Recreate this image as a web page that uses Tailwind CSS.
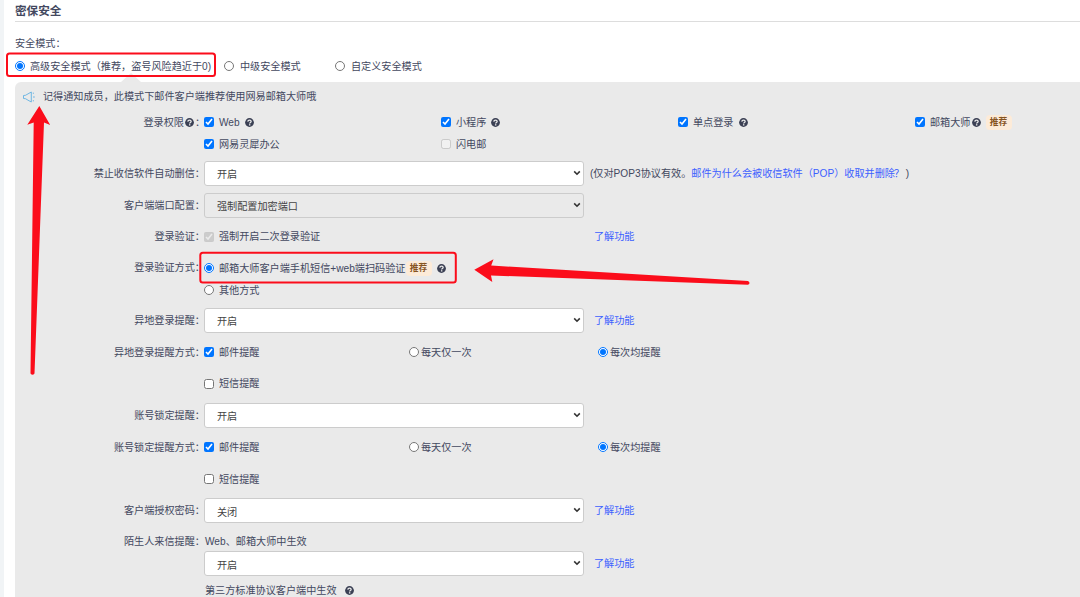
<!DOCTYPE html>
<html lang="zh-CN">
<head>
    <meta charset="UTF-8">
    <meta name="viewport" content="width=device-width, initial-scale=1.0">
    <title>密保安全</title>
    <script src="https://cdn.jsdelivr.net/npm/@tailwindcss/browser@4"></script>
</head>
<body class="relative w-[1080px] h-[597px] overflow-hidden bg-white border-l-4 border-[#f1f4f6] font-['Liberation_Sans','Noto_Sans_CJK_SC',sans-serif] text-[10.15px] leading-[15px] text-[#434860] whitespace-nowrap">
    <!-- Icons -->
    <svg class="hidden">
        <symbol id="help" viewBox="0 0 18 18">
            <circle cx="9" cy="9" r="8.8" fill="#3b4054"/>
            <path d="M5.600 7.200C5.800 5 7.200 4.100 9.100 4.100s3.200 1 3.200 2.800c0 2.100-3 2-3 4.300" fill="none" stroke="#eaeaea" stroke-width="2.600"/>
            <rect x="7.900" y="12.400" width="2.800" height="2.600" fill="#eaeaea"/>
        </symbol>
        <symbol id="chevron" viewBox="0 0 8 6">
            <path d="M1.200 1.400L4 4.200L6.800 1.400" fill="none" stroke="#333" stroke-width="1.600"/>
        </symbol>
    </svg>

    <div class="pl-[11px]">
        <!-- Title -->
        <h2 class="h-[22px] pt-[3px] text-[11.6px] font-bold leading-[15px] text-[#434860] border-b border-[#dddddd]">密保安全</h2>

        <!-- Security mode -->
        <p class="pt-[14px] h-[36px]">安全模式：</p>
        <div class="flex h-[24px] pb-[8px] items-center">
            <label class="flex items-center w-[209px]"><input type="radio" name="mode" checked class="size-[10px] mr-[5px]">高级安全模式（推荐，盗号风险趋近于0)</label>
            <label class="flex items-center w-[111px]"><input type="radio" name="mode" class="size-[10px] mr-[6px]">中级安全模式</label>
            <label class="flex items-center"><input type="radio" name="mode" class="size-[10px] mr-[6px]">自定义安全模式</label>
        </div>

        <!-- Settings panel -->
        <div class="relative h-[530px] bg-[#eaeaea] rounded-tl-[6px]">
            <svg class="absolute left-[106px] -top-[9px] w-[20px] h-[9px]" viewBox="0 0 20 9"><path d="M0 9L10 0L20 9Z" fill="#eaeaea"/></svg>

            <div class="flex h-[29px] items-center pl-[8px]">
                <svg class="w-[12px] h-[12px] mr-[8px]" viewBox="0 0 12 12" fill="none" stroke="#62b1e2" stroke-width=".9"><path d="M.5 4.500L2.500 4.300L8.300 1V11L5 9.200L2.500 7.700L.5 7.500ZM9.800 2.200H11M10 6H11.800M9.800 9.800H11"/></svg>
                <span>记得通知成员，此模式下邮件客户端推荐使用网易邮箱大师哦</span>
            </div>

            <div class="flex h-[46px]">
                <div class="flex w-[190px] -mr-px h-[22px] items-center justify-end">登录权限<svg class="size-[9px] ml-px"><use href="#help"/></svg><span class="ml-[1px] w-[10px]">：</span></div>
                <div>
                    <div class="flex h-[22px] items-center">
                        <label class="flex items-center w-[237px]"><input type="checkbox" checked class="size-[10px] mr-[5px]">Web<svg class="size-[9px] ml-[5px]"><use href="#help"/></svg></label>
                        <label class="flex items-center w-[237px]"><input type="checkbox" checked class="size-[10px] mr-[5px]">小程序<svg class="size-[9px] ml-[5px]"><use href="#help"/></svg></label>
                        <label class="flex items-center w-[237px]"><input type="checkbox" checked class="size-[10px] mr-[5px]">单点登录<svg class="size-[9px] ml-[5px]"><use href="#help"/></svg></label>
                        <label class="flex items-center"><input type="checkbox" checked class="size-[10px] mr-[5px]">邮箱大师<svg class="size-[9px] ml-px"><use href="#help"/></svg><span class="ml-[5px] w-[26px] h-[15px] text-center text-[8.700px] leading-[15px] font-bold text-[#86541f] bg-[#fdebd8] rounded-[4px]">推荐</span></label>
                    </div>
                    <div class="flex h-[22px] items-center">
                        <label class="flex items-center w-[237px]"><input type="checkbox" checked class="size-[10px] mr-[5px]">网易灵犀办公</label>
                        <label class="flex items-center"><input type="checkbox" disabled class="size-[10px] mr-[5px]">闪电邮</label>
                    </div>
                </div>
            </div>

            <div class="flex h-[32px] items-center">
                <div class="w-[190px] -mr-px text-right">禁止收信软件自动删信：</div>
                <div class="relative">
                    <select class="block appearance-none w-[380px] h-[25px] pl-[12px] pt-[3px] bg-white border border-[#cccccc] rounded-[3px] text-[#444]"><option>开启</option></select>
                    <svg class="absolute right-[3px] top-[9px] w-[8px] h-[6px]"><use href="#chevron"/></svg>
                </div>
                <span class="ml-[6px]">(仅对POP3协议有效。<a class="text-[#3c60ff]">邮件为什么会被收信软件（POP）收取并删除<span class="inline-block w-[8px] indent-[-1px]">？</span></a> )</span>
            </div>

            <div class="flex h-[32px] items-center">
                <div class="w-[190px] -mr-px text-right">客户端端口配置：</div>
                <div class="relative">
                    <select class="block appearance-none w-[380px] h-[25px] pl-[12px] pt-[3px] bg-[#eaeaea] border border-[#cccccc] rounded-[3px] text-[#444]"><option>强制配置加密端口</option></select>
                    <svg class="absolute right-[3px] top-[9px] w-[8px] h-[6px]"><use href="#chevron"/></svg>
                </div>
            </div>

            <div class="flex h-[31px] items-center">
                <div class="w-[190px] -mr-px text-right">登录验证：</div>
                <label class="flex items-center w-[390px]"><input type="checkbox" checked disabled class="size-[10px] mr-[5px]">强制开启二次登录验证</label>
                <a class="text-[#3c60ff]">了解功能</a>
            </div>

            <div class="flex h-[52px] pt-[5px]">
                <div class="w-[190px] -mr-px h-[22px] leading-[22px] text-right">登录验证方式：</div>
                <div>
                    <label class="flex h-[22px] items-center"><input type="radio" name="verify" checked class="size-[10px] mr-[5px]">邮箱大师客户端手机短信+web端扫码验证<span class="w-[26px] h-[15px] text-center text-[8.700px] leading-[15px] font-bold text-[#86541f] bg-[#fdebd8] rounded-[4px]">推荐</span><svg class="size-[9px] ml-[5px]"><use href="#help"/></svg></label>
                    <label class="flex h-[22px] items-center"><input type="radio" name="verify" class="size-[10px] mr-[5px]">其他方式</label>
                </div>
            </div>

            <div class="flex h-[32px] items-center">
                <div class="w-[190px] -mr-px text-right">异地登录提醒：</div>
                <div class="relative">
                    <select class="block appearance-none w-[380px] h-[25px] pl-[12px] pt-[3px] bg-white border border-[#cccccc] rounded-[3px] text-[#444]"><option>开启</option></select>
                    <svg class="absolute right-[3px] top-[9px] w-[8px] h-[6px]"><use href="#chevron"/></svg>
                </div>
                <a class="ml-[10px] text-[#3c60ff]">了解功能</a>
            </div>

            <div class="flex h-[32px] items-center">
                <div class="w-[190px] -mr-px text-right">异地登录提醒方式：</div>
                <label class="flex items-center w-[205px]"><input type="checkbox" checked class="size-[10px] mr-[5px]">邮件提醒</label>
                <label class="flex items-center w-[189px]"><input type="radio" name="remote" class="size-[10px] mr-[2px]">每天仅一次</label>
                <label class="flex items-center"><input type="radio" name="remote" checked class="size-[10px] mr-[2px]">每次均提醒</label>
            </div>
            <div class="flex h-[31px] items-center pl-[189px]">
                <label class="flex items-center"><input type="checkbox" class="size-[10px] mr-[5px]">短信提醒</label>
            </div>

            <div class="flex h-[32px] items-center">
                <div class="w-[190px] -mr-px text-right">账号锁定提醒：</div>
                <div class="relative">
                    <select class="block appearance-none w-[380px] h-[25px] pl-[12px] pt-[3px] bg-white border border-[#cccccc] rounded-[3px] text-[#444]"><option>开启</option></select>
                    <svg class="absolute right-[3px] top-[9px] w-[8px] h-[6px]"><use href="#chevron"/></svg>
                </div>
            </div>

            <div class="flex h-[32px] items-center">
                <div class="w-[190px] -mr-px text-right">账号锁定提醒方式：</div>
                <label class="flex items-center w-[205px]"><input type="checkbox" checked class="size-[10px] mr-[5px]">邮件提醒</label>
                <label class="flex items-center w-[189px]"><input type="radio" name="lock" class="size-[10px] mr-[2px]">每天仅一次</label>
                <label class="flex items-center"><input type="radio" name="lock" checked class="size-[10px] mr-[2px]">每次均提醒</label>
            </div>
            <div class="flex h-[32px] items-center pl-[189px]">
                <label class="flex items-center"><input type="checkbox" class="size-[10px] mr-[5px]">短信提醒</label>
            </div>

            <div class="flex h-[31px] items-center">
                <div class="w-[190px] -mr-px text-right">客户端授权密码：</div>
                <div class="relative">
                    <select class="block appearance-none w-[380px] h-[25px] pl-[12px] pt-[3px] bg-white border border-[#cccccc] rounded-[3px] text-[#444]"><option>关闭</option></select>
                    <svg class="absolute right-[3px] top-[9px] w-[8px] h-[6px]"><use href="#chevron"/></svg>
                </div>
                <a class="ml-[10px] text-[#3c60ff]">了解功能</a>
            </div>

            <div class="flex pt-[5px]">
                <div class="w-[190px] -mr-px h-[22px] leading-[22px] text-right">陌生人来信提醒：</div>
                <div>
                    <div class="h-[20px] pl-px leading-[22px]">Web、邮箱大师中生效</div>
                    <div class="flex h-[25px] items-center">
                        <div class="relative">
                            <select class="block appearance-none w-[380px] h-[25px] pl-[12px] pt-[3px] bg-white border border-[#cccccc] rounded-[3px] text-[#444]"><option>开启</option></select>
                            <svg class="absolute right-[3px] top-[9px] w-[8px] h-[6px]"><use href="#chevron"/></svg>
                        </div>
                        <a class="ml-[10px] text-[#3c60ff]">了解功能</a>
                    </div>
                    <div class="flex items-center h-[29px] pl-px">第三方标准协议客户端中生效<svg class="size-[9px] ml-[8px]"><use href="#help"/></svg></div>
                </div>
            </div>
        </div>
    </div>

    <!-- Red marks over the form -->
    <svg class="absolute top-0 -left-[4px] w-[1080px] h-[597px] pointer-events-none" viewBox="0 0 1080 597">
        <g fill="none" stroke="#fb0d1b" stroke-width="2">
            <rect x="7" y="53.500" width="208" height="22.500" rx="2.500"/>
            <rect x="200.300" y="252.700" width="255.500" height="29.800" rx="2.500"/>
        </g>
        <g fill="#fb0d1b">
            <path d="M39.300 106L50.200 125L44 122.600L34.500 373.500Q32.500 376 30.500 373.500L33.700 122.600L27.300 124.700Z"/>
            <path d="M474.300 269.700L493.500 259.300L491.200 265.600L748 281Q751 283 748 284.700L491 275.500L492.300 282Z"/>
        </g>
    </svg>
</body>
</html>
